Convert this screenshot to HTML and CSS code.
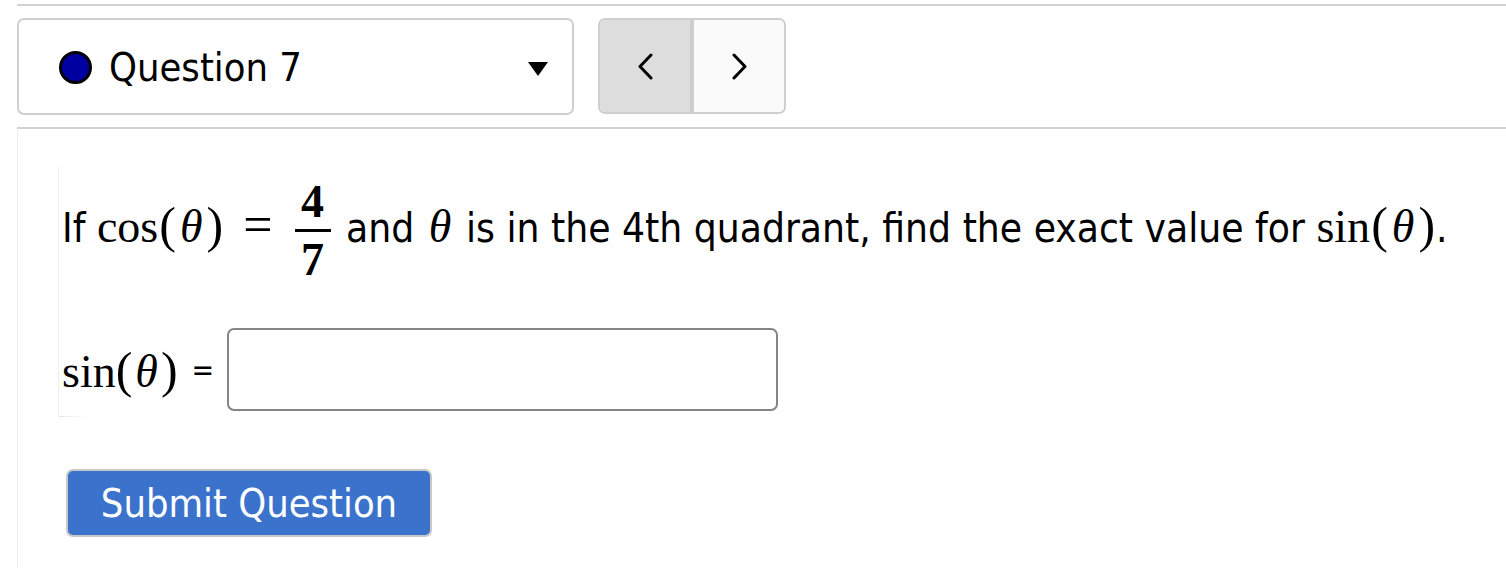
FILE: index.html
```html
<!DOCTYPE html>
<html>
<head>
<meta charset="utf-8">
<link rel="stylesheet" href="styles.css">
</head>
<body>
<div class="page">
  <div class="rule rule-top"></div>
  <div class="header">
    <div class="qselect">
      <span class="dot"></span>
      <span class="qlabel">Question 7</span>
      <svg class="caret" width="20" height="14" viewBox="0 0 20 14"><polygon points="0,0 20,0 10,14" fill="#000"/></svg>
    </div>
    <div class="nav">
      <div class="nav-btn prev">
        <svg width="17" height="27" viewBox="0 0 17 27"><polyline points="14,2 3,13.5 14,25" fill="none" stroke="#000" stroke-width="3" stroke-linecap="round" stroke-linejoin="round"/></svg>
      </div>
      <div class="nav-sep"></div>
      <div class="nav-btn next">
        <svg width="17" height="27" viewBox="0 0 17 27"><polyline points="3,2 14,13.5 3,25" fill="none" stroke="#000" stroke-width="3" stroke-linecap="round" stroke-linejoin="round"/></svg>
      </div>
    </div>
  </div>
  <div class="rule rule-mid"></div>
  <div class="content">
    <div class="question">
      <p class="qtext">If <span class="math"><span class="fn">cos</span><span class="paren">(</span><i class="var">θ</i><span class="paren">)</span><span class="eq">=</span><span class="frac"><span class="num">4</span><span class="bar"></span><span class="den">7</span></span></span> and <i class="var">θ</i> is in the 4th quadrant, find the exact value for <span class="math"><span class="fn">sin</span><span class="paren">(</span><i class="var">θ</i><span class="paren">)</span></span>.</p>
      <div class="answer">
        <span class="math"><span class="fn">sin</span><span class="paren">(</span><i class="var">θ</i><span class="paren">)</span></span>
        <span class="aeq">=</span>
        <input class="ans-input" type="text">
      </div>
    </div>
    <button class="submit">Submit Question</button>
  </div>
</div>
</body>
</html>
```
FILE: styles.css
```css
html, body {
  margin: 0;
  padding: 0;
  background: #fff;
}
body {
  font-family: "DejaVu Sans Condensed", "DejaVu Sans", sans-serif;
  color: #000;
  height: 568px;
  overflow: hidden;
}
.page {
  padding-left: 17px;
}
.rule {
  height: 2px;
  background: #d2d2d2;
}
.rule-top {
  margin-top: 4px;
}
.header {
  display: flex;
  align-items: flex-start;
  padding-top: 12px;
  height: 109px;
  box-sizing: border-box;
}
.qselect {
  box-sizing: border-box;
  width: 557px;
  height: 97px;
  border: 2px solid #cfcfcf;
  border-radius: 7px;
  display: flex;
  align-items: center;
  padding-left: 40px;
  padding-right: 24px;
}
.dot {
  width: 33px;
  height: 33px;
  box-sizing: border-box;
  border: 3px solid #000;
  border-radius: 50%;
  background: #0000a0;
  margin-right: 17px;
  flex: none;
  margin-top: 2px;
}
.qlabel {
  font-size: 39.5px;
  flex: 1;
}
.caret {
  margin-top: 4px;
}
.nav {
  margin-left: 24px;
  box-sizing: border-box;
  width: 188px;
  height: 96px;
  border: 2px solid #cfcfcf;
  border-radius: 7px;
  display: flex;
  overflow: hidden;
}
.nav-btn {
  flex: 1;
  display: flex;
  align-items: center;
  justify-content: center;
}
.prev {
  background: #dddddd;
}
.next {
  background: #fafafa;
}
.nav-sep {
  width: 4px;
  background: #cdcdcd;
}
.rule-mid {
  margin-top: 12px;
}
.content {
  box-sizing: border-box;
  border-left: 1px solid #eeeeee;
  padding-left: 40px;
  padding-top: 38px;
  height: 439px;
}
.question {
  border-left: 1px solid #eeeeee;
  position: relative;
  padding-left: 3px;
  padding-bottom: 6px;
}
.question::after {
  content: "";
  position: absolute;
  left: 0;
  bottom: 0;
  width: 30px;
  height: 1px;
  background: linear-gradient(to right, #e6e6e6, rgba(255,255,255,0));
}
.qtext {
  margin: 0;
  font-size: 40.3px;
  line-height: 115px;
  height: 115px;
  white-space: nowrap;
}
.math {
  font-family: "Liberation Serif", "DejaVu Serif", serif;
  font-size: 46px;
  white-space: nowrap;
}
.var {
  font-family: "Liberation Serif", "DejaVu Serif", serif;
  font-style: italic;
  font-size: 46px;
  padding: 0 3px;
}
.paren {
  font-size: 50px;
  padding: 0 1px;
}
.eq {
  font-size: 52px;
  margin: 0 22px 0 19px;
}
.frac {
  display: inline-flex;
  flex-direction: column;
  align-items: center;
  vertical-align: middle;
  line-height: 1;
  margin-right: 4px;
}
.num, .den {
  font-size: 46px;
  font-weight: bold;
  line-height: 42px;
}
.bar {
  width: 36px;
  height: 3px;
  background: #000;
  margin: 6px 0 7px;
}
.answer {
  display: flex;
  align-items: center;
  margin-top: 46px;
  height: 83px;
}
.answer .paren {
  padding: 0;
}
.aeq {
  font-size: 30px;
  margin: 0 13px 0 14px;
}
.ans-input {
  box-sizing: border-box;
  width: 551px;
  height: 83px;
  border: 2px solid #858585;
  border-radius: 7px;
  background: #fff;
  margin: 0;
  outline: none;
}
.submit {
  display: block;
  margin-top: 52px;
  margin-left: 8px;
  box-sizing: border-box;
  width: 366px;
  height: 68px;
  background: #3b73cc;
  color: #fff;
  border: 2px solid #c8c8c8;
  border-radius: 7px;
  font-family: "DejaVu Sans Condensed", "DejaVu Sans", sans-serif;
  font-size: 39.5px;
  padding: 0;
}
```
